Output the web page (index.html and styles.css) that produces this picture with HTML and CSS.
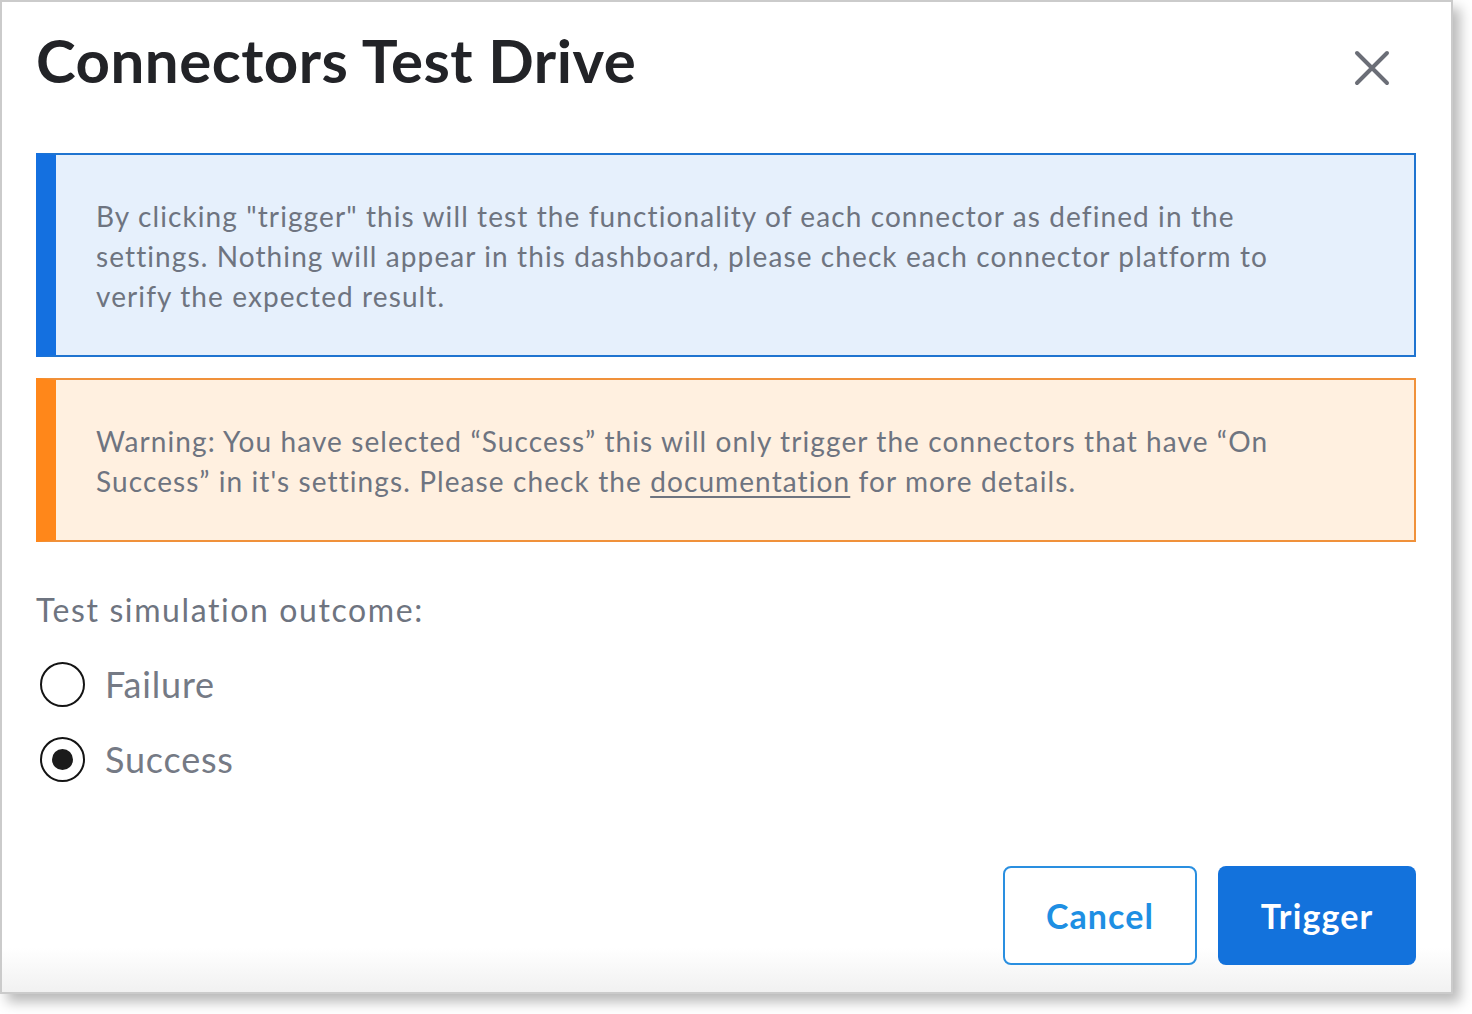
FILE: index.html
```html
<!DOCTYPE html>
<html lang="en">
<head>
<meta charset="utf-8">
<title>Connectors Test Drive</title>
<link rel="stylesheet" href="styles.css">
</head>
<body>
<div class="modal">
  <div class="header">
    <h1 class="title">Connectors Test Drive</h1>
    <button class="close" aria-label="Close">
      <svg width="36" height="36" viewBox="0 0 36 36"><path d="M3 3 L33 33 M33 3 L3 33" stroke="#6b6e77" stroke-width="4" stroke-linecap="round" fill="none"/></svg>
    </button>
  </div>
  <div class="note note-info">
    By clicking "trigger" this will test the functionality of each connector as defined in the<br>settings. Nothing will appear in this dashboard, please check each connector platform to<br>verify the expected result.
  </div>
  <div class="note note-warn">
    Warning: You have selected “Success” this will only trigger the connectors that have “On<br>Success” in it's settings. Please check the <a class="link" href="#">documentation</a> for more details.
  </div>
  <div class="field-label">Test simulation outcome:</div>
  <div class="radio-row first">
    <span class="radio"></span>
    <span class="radio-label">Failure</span>
  </div>
  <div class="radio-row">
    <span class="radio checked"></span>
    <span class="radio-label">Success</span>
  </div>
  <div class="actions">
    <button class="btn btn-cancel">Cancel</button>
    <button class="btn btn-primary">Trigger</button>
  </div>
</div>
</body>
</html>
```
FILE: styles.css
```css
html, body {
  margin: 0;
  padding: 0;
  background: #ffffff;
}
body {
  font-family: "Lato", "Liberation Sans", sans-serif;
  width: 1472px;
  height: 1014px;
  overflow: hidden;
}
.modal {
  box-sizing: border-box;
  width: 1453px;
  height: 994px;
  border: 2px solid #cbcbcb;
  padding: 22px 35px 27px 34px;
  background: linear-gradient(to bottom, #ffffff calc(100% - 44px), #f1f1f1 100%);
  box-shadow: 7px 8px 12px rgba(0, 0, 0, 0.28);
}
.header {
  display: flex;
  justify-content: space-between;
  align-items: flex-start;
  height: 72px;
  margin-bottom: 57px;
}
.title {
  margin: 0;
  font-size: 60px;
  line-height: 72px;
  font-weight: 700;
  color: #222327;
  letter-spacing: 0.5px;
}
.close {
  margin: 26px 26px 0 0;
  padding: 0;
  border: 0;
  background: none;
  width: 36px;
  height: 36px;
  display: block;
}
.close svg { display: block; }
.note {
  padding: 41px 40px 39px 40px;
  font-size: 28px;
  line-height: 40px;
  color: #6e7480;
  letter-spacing: 1.1px;
}
.note-info {
  background: #e6f0fc;
  border: 2px solid #1f74d0;
  border-left: 20px solid #1470e0;
}
.note-warn {
  margin-top: 21px;
  background: #fff0e0;
  border: 2px solid #f0913a;
  border-left: 20px solid #ff871a;
}
.link {
  color: #6e7480;
  text-decoration: underline;
  text-decoration-thickness: 2px;
  text-underline-offset: 4px;
}
.field-label {
  margin-top: 48px;
  font-size: 32px;
  line-height: 40px;
  color: #6e7480;
  letter-spacing: 1.6px;
}
.radio-row {
  display: flex;
  align-items: center;
  height: 44px;
  margin-top: 31px;
}
.radio-row.first { margin-top: 32px; }
.radio {
  box-sizing: border-box;
  width: 45px;
  height: 45px;
  margin-left: 4px;
  border: 2px solid #141414;
  border-radius: 50%;
  background: #ffffff;
  display: flex;
  align-items: center;
  justify-content: center;
}
.radio.checked::after {
  content: "";
  width: 21px;
  height: 21px;
  border-radius: 50%;
  background: #1b1b1b;
}
.radio-label {
  margin-left: 20px;
  font-size: 36px;
  line-height: 44px;
  color: #757a85;
  letter-spacing: 0.8px;
}
.actions {
  display: flex;
  justify-content: flex-end;
  gap: 21px;
  margin-top: 85px;
}
.btn {
  box-sizing: border-box;
  height: 99px;
  border-radius: 8px;
  font-family: "Lato", "Liberation Sans", sans-serif;
  font-size: 34px;
  font-weight: 700;
  letter-spacing: 1.1px;
  padding: 0;
}
.btn-cancel {
  width: 194px;
  background: #ffffff;
  border: 2px solid #2a8fe0;
  color: #1e8fe3;
}
.btn-primary {
  width: 198px;
  background: #1372dc;
  border: 0;
  color: #ffffff;
}
```
